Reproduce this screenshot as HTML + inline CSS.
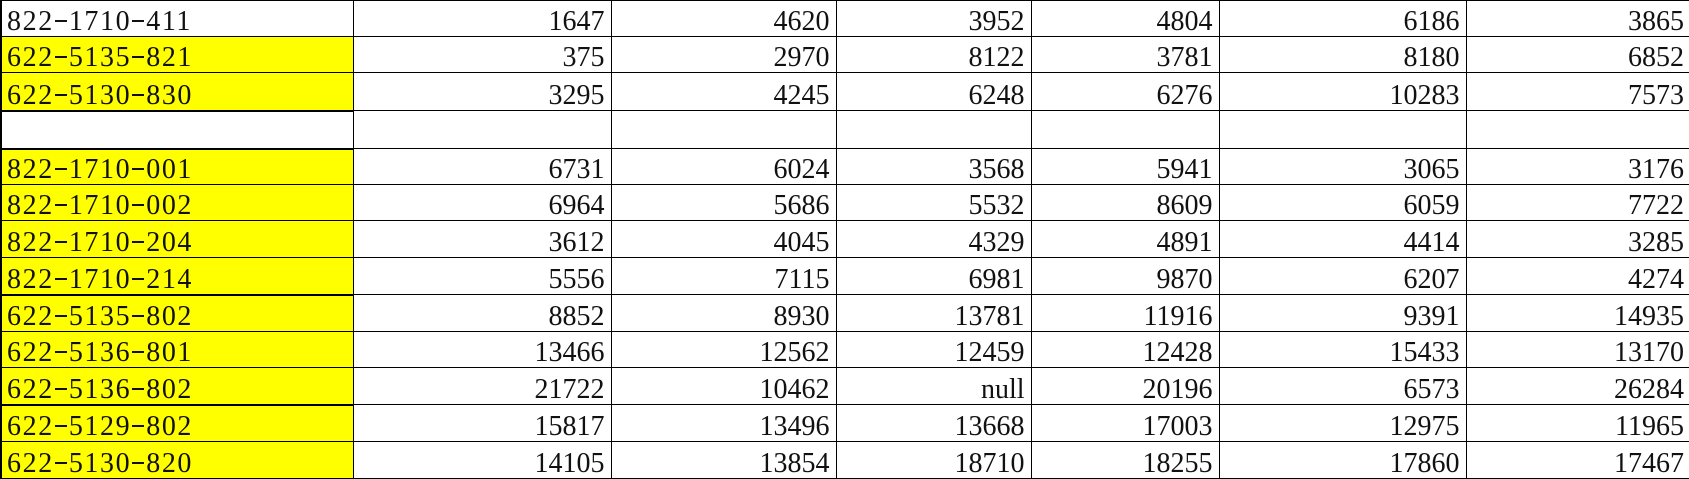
<!DOCTYPE html>
<html><head><meta charset="utf-8"><style>
html,body{margin:0;padding:0;background:#fff;width:1689px;height:479px;overflow:hidden}
table{border-collapse:collapse;table-layout:fixed;position:absolute;left:0;top:0;width:1689px}
td{border:1px solid #000;padding:0 6px 0 0;font-family:"Liberation Serif","Noto Serif CJK SC",serif;font-size:28px;line-height:28px;text-align:right;vertical-align:bottom;color:#111;white-space:nowrap;overflow:hidden}
td.k{text-align:left;padding-left:5px;letter-spacing:1.6px;border-left:2px solid #000}
td.k i{display:inline-block;width:15px;height:20px;font-style:normal;letter-spacing:0;color:transparent;background:linear-gradient(#111,#111) no-repeat 1px 10px/12px 2px;overflow:hidden;vertical-align:baseline}
.y td.k{background:#ffff00}
tr.t td.k{border-top:2px solid #000}
td:last-child{border-right:none}
</style></head><body>
<table>
<colgroup><col style="width:352px"><col style="width:258px"><col style="width:225px"><col style="width:195px"><col style="width:188px"><col style="width:247px"><col style="width:224px"></colgroup>
<tr style="height:36px"><td class="k">822<i>-</i>1710<i>-</i>411</td><td>1647</td><td>4620</td><td>3952</td><td>4804</td><td>6186</td><td>3865</td></tr>
<tr class="y" style="height:36px"><td class="k">622<i>-</i>5135<i>-</i>821</td><td>375</td><td>2970</td><td>8122</td><td>3781</td><td>8180</td><td>6852</td></tr>
<tr class="y" style="height:38px"><td class="k">622<i>-</i>5130<i>-</i>830</td><td>3295</td><td>4245</td><td>6248</td><td>6276</td><td>10283</td><td>7573</td></tr>
<tr class="t" style="height:38px"><td class="k"></td><td></td><td></td><td></td><td></td><td></td><td></td></tr>
<tr class="y t" style="height:36px"><td class="k">822<i>-</i>1710<i>-</i>001</td><td>6731</td><td>6024</td><td>3568</td><td>5941</td><td>3065</td><td>3176</td></tr>
<tr class="y" style="height:36px"><td class="k">822<i>-</i>1710<i>-</i>002</td><td>6964</td><td>5686</td><td>5532</td><td>8609</td><td>6059</td><td>7722</td></tr>
<tr class="y" style="height:37px"><td class="k">822<i>-</i>1710<i>-</i>204</td><td>3612</td><td>4045</td><td>4329</td><td>4891</td><td>4414</td><td>3285</td></tr>
<tr class="y" style="height:37px"><td class="k">822<i>-</i>1710<i>-</i>214</td><td>5556</td><td>7115</td><td>6981</td><td>9870</td><td>6207</td><td>4274</td></tr>
<tr class="y t" style="height:37px"><td class="k">622<i>-</i>5135<i>-</i>802</td><td>8852</td><td>8930</td><td>13781</td><td>11916</td><td>9391</td><td>14935</td></tr>
<tr class="y" style="height:36px"><td class="k">622<i>-</i>5136<i>-</i>801</td><td>13466</td><td>12562</td><td>12459</td><td>12428</td><td>15433</td><td>13170</td></tr>
<tr class="y" style="height:37px"><td class="k">622<i>-</i>5136<i>-</i>802</td><td>21722</td><td>10462</td><td>null</td><td>20196</td><td>6573</td><td>26284</td></tr>
<tr class="y t" style="height:37px"><td class="k">622<i>-</i>5129<i>-</i>802</td><td>15817</td><td>13496</td><td>13668</td><td>17003</td><td>12975</td><td>11965</td></tr>
<tr class="y" style="height:37px"><td class="k">622<i>-</i>5130<i>-</i>820</td><td>14105</td><td>13854</td><td>18710</td><td>18255</td><td>17860</td><td>17467</td></tr>
</table>
</body></html>
